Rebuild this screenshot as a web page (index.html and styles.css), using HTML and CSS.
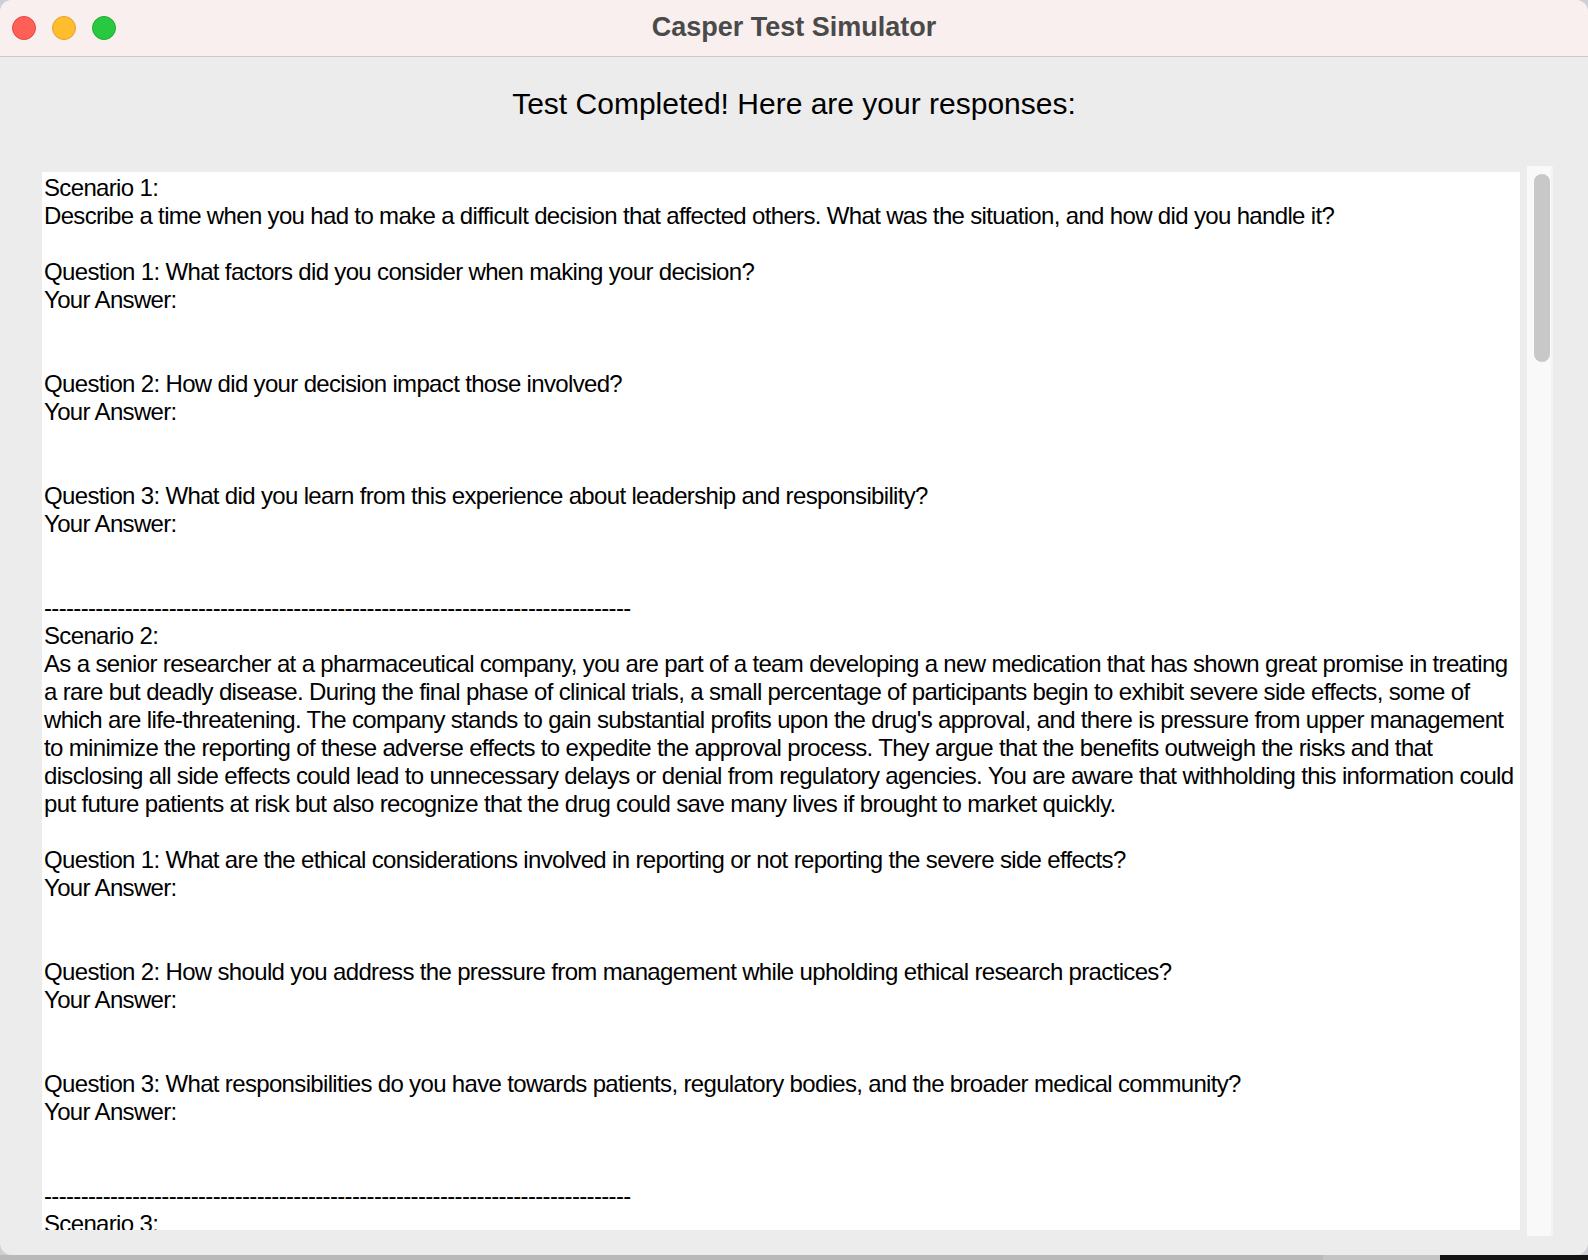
FILE: index.html
```html
<!DOCTYPE html>
<html>
<head>
<meta charset="utf-8">
<link rel="stylesheet" href="styles.css">
<title>Casper Test Simulator</title>
</head>
<body>
<div class="window">
  <div class="titlebar">
    <div class="lights">
      <span class="light red"></span>
      <span class="light yellow"></span>
      <span class="light green"></span>
    </div>
    <div class="title">Casper Test Simulator</div>
    <div></div>
  </div>
  <div class="content">
    <h1 class="heading">Test Completed! Here are your responses:</h1>
    <div class="panel">
      <div class="textbox"><div class="text">Scenario 1:
Describe a time when you had to make a difficult decision that affected others. What was the situation, and how did you handle it?

Question 1: What factors did you consider when making your decision?
Your Answer:


Question 2: How did your decision impact those involved?
Your Answer:


Question 3: What did you learn from this experience about leadership and responsibility?
Your Answer:


--------------------------------------------------------------------------------
Scenario 2:
As a senior researcher at a pharmaceutical company, you are part of a team developing a new medication that has shown great promise in treating
a rare but deadly disease. During the final phase of clinical trials, a small percentage of participants begin to exhibit severe side effects, some of
which are life-threatening. The company stands to gain substantial profits upon the drug's approval, and there is pressure from upper management
to minimize the reporting of these adverse effects to expedite the approval process. They argue that the benefits outweigh the risks and that
disclosing all side effects could lead to unnecessary delays or denial from regulatory agencies. You are aware that withholding this information could
put future patients at risk but also recognize that the drug could save many lives if brought to market quickly.

Question 1: What are the ethical considerations involved in reporting or not reporting the severe side effects?
Your Answer:


Question 2: How should you address the pressure from management while upholding ethical research practices?
Your Answer:


Question 3: What responsibilities do you have towards patients, regulatory bodies, and the broader medical community?
Your Answer:


--------------------------------------------------------------------------------
Scenario 3:
</div></div>
      <div class="scrollbar"><div class="thumb"></div></div>
    </div>
  </div>
</div>
<div class="desktop"><div class="dock-a"></div><div class="dock-b"></div><div class="dock-c"></div></div>
</body>
</html>
```

FILE: styles.css
```css
html, body {
  margin: 0;
  padding: 0;
}
body {
  width: 1588px;
  height: 1260px;
  overflow: hidden;
  background: #cfd0d6;
  font-family: "Liberation Sans", Arial, sans-serif;
}
.window {
  width: 1588px;
  height: 1255px;
  background: #ececec;
  border-radius: 12px;
  overflow: hidden;
  display: flex;
  flex-direction: column;
}
.titlebar {
  height: 56px;
  flex: none;
  background: #f8efee;
  border-bottom: 1px solid #cbcbcb;
  display: grid;
  grid-template-columns: 1fr auto 1fr;
  align-items: center;
}
.lights {
  display: flex;
  gap: 16px;
  padding-left: 12px;
}
.light {
  width: 22px;
  height: 22px;
  border-radius: 50%;
  border: 1px solid transparent;
}
.red { background: #fe5f57; border-color: #e2463f; }
.yellow { background: #febc2e; border-color: #e1a325; }
.green { background: #28c840; border-color: #1eab32; }
.title {
  font-weight: bold;
  font-size: 27px;
  color: #4a4a4a;
  padding-bottom: 2px;
}
.content {
  flex: 1;
  display: flex;
  flex-direction: column;
}
.heading {
  margin: 29px 0 44px;
  height: 36px;
  line-height: 36px;
  font-size: 30px;
  font-weight: normal;
  text-align: center;
  color: #000;
}
.panel {
  display: flex;
  align-items: flex-start;
  padding-left: 42px;
  gap: 7px;
}
.textbox {
  margin-top: 6px;
  width: 1478px;
  height: 1058px;
  background: #fff;
  overflow: hidden;
}
.text {
  white-space: pre;
  padding: 2px 0 0 2px;
  font-size: 24px;
  line-height: 28px;
  letter-spacing: -0.66px;
  color: #000;
}
.scrollbar {
  width: 26px;
  height: 1070px;
  background: #f9f9f9;
  border-right: 2px solid #f3f3f3;
  padding-top: 8px;
  box-sizing: border-box;
}
.thumb {
  width: 16px;
  height: 188px;
  margin-left: 7px;
  border-radius: 8px;
  background: #c8c8c8;
}
.desktop {
  height: 5px;
  display: flex;
}
.dock-a { width: 1323px; background: #b9b9b9; }
.dock-b { width: 117px; background: #c4c4c4; }
.dock-c { flex: 1; background: #141414; }
```
